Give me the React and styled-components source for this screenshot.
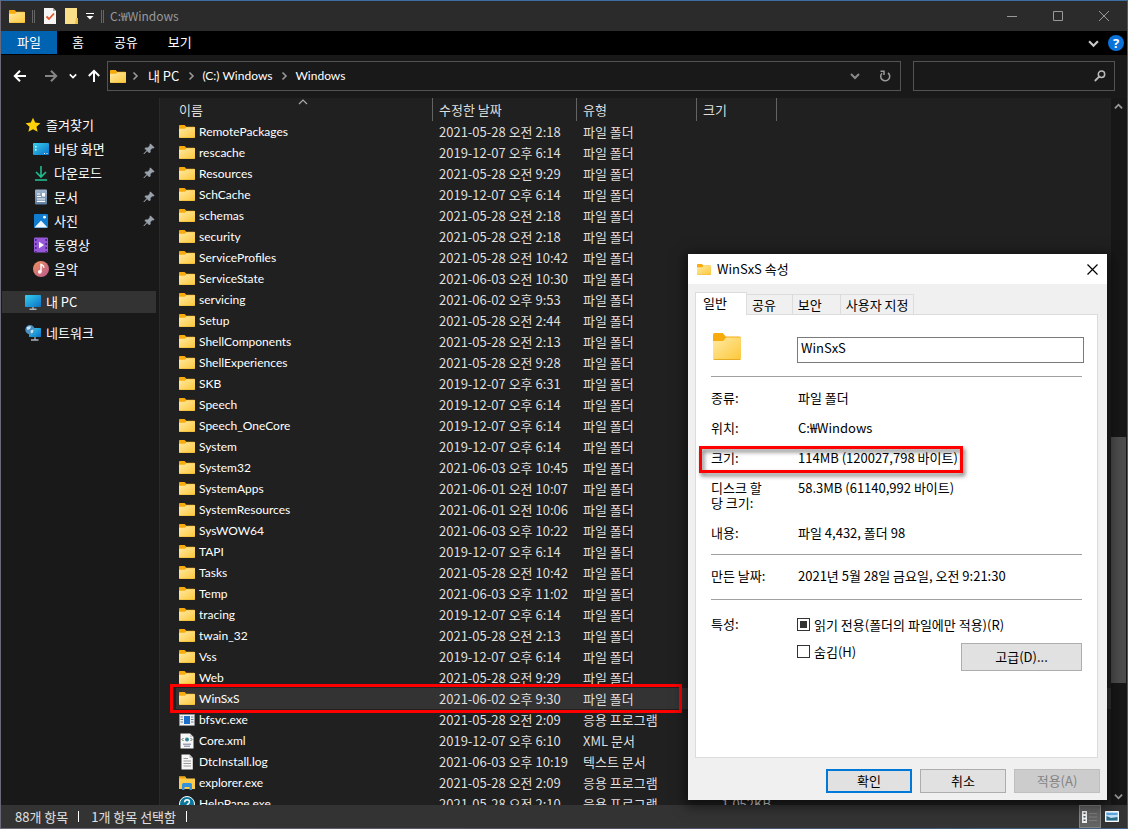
import React, { useEffect, useRef } from "react";
import styled, { createGlobalStyle, css } from "styled-components";

const KO = `"Noto Sans CJK KR", sans-serif`;
const LATIN = `Lato, "Noto Sans CJK KR", sans-serif`;

const Global = createGlobalStyle`
  *, *::before, *::after { box-sizing: border-box; }
  body { margin: 0; background: #3a5f8a; font-family: ${KO}; font-size: 13px; line-height: 15px; }
  button, input { font: inherit; color: inherit; }
  button { border: 0; padding: 0; background: none; cursor: default; }
  a { color: inherit; text-decoration: none; }
  ul, ol, dl, dd { margin: 0; padding: 0; list-style: none; }
  svg { display: block; flex: none; }
`;

const Desktop = styled.div`
  height: 100vh;
  padding: 0 1px 1px;
  background: linear-gradient(90deg, #6c6878, #565264 50%, #3d6185);
`;
const Explorer = styled.main`
  position: relative;
  height: 100%;
  display: flex;
  flex-direction: column;
  background: #191919;
  color: #fff;
  border-top: 1px solid #3d6da3;
`;

/* Title bar */
const TitleBar = styled.header`
  flex: none;
  display: flex;
  align-items: center;
  height: 30px;
  padding-left: 8px;
  background: #2b2b2b;
  color: #999;
`;
const QuickAccess = styled.div`
  display: flex;
  align-items: center;
  gap: 7px;
`;
const Grip = styled.span`
  width: 3px;
  height: 13px;
  border: solid #666;
  border-width: 0 1px;
`;
const Title = styled.h1`
  flex: 1;
  margin: 0 0 0 6px;
  padding-bottom: 2px;
  font: 12px/15px ${KO};
`;
const WindowButton = styled.button`
  width: 46px;
  height: 30px;
  display: grid;
  place-items: center;
`;

/* Ribbon */
const Ribbon = styled.nav`
  flex: none;
  display: flex;
  height: 24px;
  background: #000;
`;
const RibbonTab = styled.button`
  height: 23px;
  padding: 0 15px 2px;
  color: #fff;
  ${(p) => p.$primary && css`padding: 0 16px 2px; background: #0063b1;`}
`;
const RibbonEnd = styled.div`
  margin-left: auto;
  padding-right: 3px;
  display: flex;
  align-items: center;
  gap: 9px;
`;
const HelpButton = styled.button`
  width: 16px;
  height: 16px;
  border-radius: 50%;
  background: #0a72d8;
  color: #fff;
  font: bold 13px/16px "Noto Sans", sans-serif;
`;

/* Address bar */
const NavBar = styled.div`
  flex: none;
  display: flex;
  align-items: center;
  height: 43px;
  padding: 0 12px 1px;
`;
const NavButtons = styled.div`
  width: 94px;
  flex: none;
  display: flex;
  align-items: center;
`;
const NavButton = styled.button`
  width: ${(p) => p.$w}px;
  height: 22px;
  display: grid;
  place-items: center start;
`;
const AddressBox = styled.div`
  flex: 1;
  display: flex;
  align-items: center;
  height: 30px;
  padding-left: 2px;
  border: 1px solid #535353;
`;
const Crumbs = styled.ol`
  flex: 1;
  display: flex;
  align-items: center;
  li { display: flex; align-items: center; }
  svg { margin: 0 6px 0 7px; }
  li:first-child svg { margin: 0; }
  li:first-child svg + svg { margin: 0 8px 0 4px; }
`;
const Crumb = styled.a`
  padding-bottom: 2px;
  font: ${(p) => (p.$latin ? `12px/15px ${LATIN}` : `13px/15px ${KO}`)};
`;
const BoxButton = styled.button`
  width: 30px;
  height: 28px;
  display: grid;
  place-items: center;
`;
const SearchBox = styled.label`
  flex: none;
  width: 202px;
  height: 30px;
  margin-left: 12px;
  display: flex;
  align-items: center;
  padding: 0 8px;
  border: 1px solid #535353;
  input { flex: 1; min-width: 0; border: 0; outline: 0; background: none; }
`;

/* Body */
const Body = styled.div`
  flex: 1;
  min-height: 0;
  display: grid;
  grid-template-columns: 159px minmax(0, 1fr) 16px;
`;
const Sidebar = styled.nav`
  display: flex;
  flex-direction: column;
  gap: 8px;
  padding: 15px 3px 0 1px;
  border-right: 1px solid #2a2a2a;
`;
const SideItem = styled.a`
  display: flex;
  align-items: center;
  height: 24px;
  padding: 0 1px 0 ${(p) => (p.$nested ? 31 : 23)}px;
  ${(p) => p.$selected && css`height: 22px; margin: 2px 0 0; background: #333;`}
  span { flex: 1; margin-left: 5px; padding-bottom: 2px; }
`;
const ListPane = styled.section`
  min-height: 0;
  overflow: hidden;
  padding-left: 16px;
  background: #202020;
`;
const FileTable = styled.table`
  width: 100%;
  table-layout: fixed;
  border-collapse: separate;
  border-spacing: 0;
  th, td { padding: 0 6px; text-align: left; font-weight: 400; white-space: nowrap; color: #dedede; }
  th:first-child, td:first-child { padding-left: 3px; }
  td:nth-child(4) { text-align: right; }
`;
const HeadCell = styled.th`
  position: relative;
  height: 23px;
  border-right: ${(p) => (p.$last ? "0" : "1px solid #636363")};
  svg { position: absolute; top: -1px; left: calc(50% - 6px); }
`;
const FileRow = styled.tr`
  position: relative;
  height: 21px;
  background: ${(p) => (p.$selected ? "#333" : "none")};
  ${(p) => p.$selected && css`
    &::after {
      content: "";
      position: absolute;
      top: -4px;
      left: -6px;
      width: 512px;
      height: 29px;
      border: 3px solid #f00;
    }
  `}
`;
const FileName = styled.div`
  display: flex;
  align-items: center;
  gap: 4px;
  color: #fff;
  font: 12px/15px ${LATIN};
`;

/* Scroll bar */
const ScrollBar = styled.div`
  display: grid;
  grid-template-rows: 17px 322fr 246fr 105fr 17px;
  padding-right: 1px;
  background: #171717;
`;
const ScrollArrow = styled.button`
  grid-row: ${(p) => (p.$end ? 5 : 1)};
  display: grid;
  place-items: center;
`;
const Thumb = styled.div`
  grid-row: 3;
  background: #4d4d4d;
`;

/* Status bar */
const StatusBar = styled.footer`
  flex: none;
  display: flex;
  align-items: center;
  height: 23px;
  padding: 0 4px 0 14px;
  background: #333;
  color: #e0e0e0;
`;
const StatusText = styled.span`
  padding: 0 11px 1px 0;
  margin-right: 12px;
  background: linear-gradient(#fff, #fff) right center / 1px 11px no-repeat;
`;
const ViewButton = styled.button`
  width: 22px;
  height: 23px;
  display: grid;
  place-items: center;
  ${(p) => p.$active && css`margin-left: auto; background: #626262; border: 1px solid #838383;`}
`;

/* Properties dialog */
const Dialog = styled.section`
  position: absolute;
  right: 20px;
  bottom: 28px;
  width: 419px;
  background: #f0f0f0;
  color: #000;
  box-shadow: 0 3px 12px 3px rgba(0, 0, 0, 0.55);
`;
const DialogTitle = styled.header`
  display: flex;
  align-items: center;
  gap: 6px;
  height: 30px;
  padding-left: 9px;
  background: #fff;
  h2 { flex: 1; margin: 0; padding-bottom: 2px; font: 13px/15px ${KO}; }
`;
const CloseButton = styled.button`
  width: 30px;
  height: 30px;
  display: grid;
  place-items: center;
`;
const TabStrip = styled.div`
  display: flex;
  align-items: flex-end;
  height: 31px;
  margin: 0 7px -1px;
`;
const Tab = styled.button`
  height: 21px;
  padding: 0 ${(p) => p.$end || 16}px 1px 5px;
  border: 1px solid #dcdcdc;
  border-left-width: 0;
  ${(p) => p.$active && css`
    position: relative;
    height: 23px;
    padding: 0 19px 4px 7px;
    border-left-width: 1px;
    border-bottom: 0;
    background: #fff;
  `}
`;
const Panel = styled.div`
  margin: 0 9px 0 7px;
  padding: 18px 13px 86px 15px;
  border: 1px solid #dcdcdc;
  background: #fff;
`;
const NameRow = styled.div`
  display: flex;
  justify-content: space-between;
  align-items: flex-end;
  height: 30px;
  padding-left: 2px;
  svg { align-self: flex-start; }
`;
const NameInput = styled.input`
  width: 287px;
  height: 26px;
  padding: 0 3px 5px;
  border: 1px solid #7a7a7a;
  background: #fff;
`;
const Rule = styled.hr`
  height: 1px;
  margin: ${(p) => p.$top || 14}px 2px ${(p) => p.$bottom || 13}px 0;
  border: 0;
  background: #a0a0a0;
`;
const Props = styled.dl`
  display: grid;
  gap: 15px;
`;
const Prop = styled.div`
  position: relative;
  display: grid;
  grid-template-columns: 60px 1fr;
  column-gap: 27px;
  word-break: break-all;
  dt { white-space: ${(p) => (p.$nowrap ? "nowrap" : "normal")}; }
  ${(p) => p.$marked && css`
    &::after {
      content: "";
      position: absolute;
      top: -4px;
      left: -12px;
      width: 264px;
      height: 27px;
      border: 3px solid #f00;
      filter: drop-shadow(2px 3px 2px rgba(0, 0, 0, 0.55));
    }
  `}
`;
const Attributes = styled.fieldset`
  display: grid;
  grid-template-columns: 86px 1fr;
  margin: 0 2px 0 0;
  padding: 0;
  border: 0;
`;
const CheckLabel = styled.label`
  display: flex;
  align-items: center;
  gap: 4px;
  height: 17px;
`;
const CheckInput = styled.input`
  appearance: none;
  width: 13px;
  height: 13px;
  margin: 0;
  padding: 2px;
  border: 1px solid #333;
  background: #fff;
  &:indeterminate { background: #333 content-box; }
`;
const AttrLine = styled.div`
  display: flex;
  justify-content: space-between;
  margin-top: 10px;
`;
const PushButton = styled.button`
  width: ${(p) => (p.$large ? 121 : 86)}px;
  height: ${(p) => (p.$large ? 28 : 24)}px;
  padding-bottom: 2px;
  border: ${(p) => (p.$default ? "2px solid #0078d7" : "1px solid #adadad")};
  background: #e1e1e1;
  &:disabled { background: #ccc; border-color: #bfbfbf; color: #838383; }
`;
const DialogButtons = styled.footer`
  display: flex;
  justify-content: flex-end;
  gap: 8px;
  padding: 11px 7px 7px;
`;

/* Icons */
const Folder = ({ width = 16, height = 13 }) => (
  <svg width={width} height={height} viewBox="0 1 16 13" preserveAspectRatio="none">
    <defs>
      <linearGradient id="fold" x1="0" y1="0" x2="1" y2="1">
        <stop offset="0" stopColor="#ffe9a3" />
        <stop offset="1" stopColor="#fdc83a" />
      </linearGradient>
    </defs>
    <path d="M0 2Q0 1 .9 1H5.6L7.3 2.7H15Q16 2.7 16 3.7V7H0z" fill="#f7ab0c" />
    <path d="M0 4.8H5.8L7.6 3.2H16V13.2Q16 14 15.2 14H.8Q0 14 0 13.2z" fill="url(#fold)" />
    <path d="M.4 13.8H15.6" stroke="#e5a91f" strokeWidth=".5" />
  </svg>
);
const Chevron = ({ dir = "down", size = 10, color = "#c8c8c8", w = 2 }) => {
  const d = { down: "M1 3L5 7L9 3", up: "M1 7L5 3L9 7", right: "M3.5 1.5L7 5L3.5 8.5" }[dir];
  return (
    <svg width={size} height={size} viewBox="0 0 10 10" fill="none" stroke={color} strokeWidth={w}>
      <path d={d} />
    </svg>
  );
};
const Arrow = ({ rotate = 0, color = "#fff" }) => (
  <svg width="14" height="14" viewBox="0 0 14 14" fill="none" stroke={color} strokeWidth="2">
    <path transform={`rotate(${rotate} 7 7)`} d="M13 7H2M7 1.8L1.8 7L7 12.2" />
  </svg>
);
const Pin = () => (
  <svg width="12" height="12" viewBox="0 0 12 12">
    <path d="M7.4 .8L11.2 4.6L10 5.2L9.2 5L7.2 7.2L7.3 9L6.3 10L4.1 7.8L1 11L.8 10.8L3.8 7.6L1.8 5.6L2.8 4.7L4.7 4.8L6.9 2.8L6.7 2z" fill="#9aa3ab" stroke="#9aa3ab" strokeWidth=".6" />
  </svg>
);
const icons = {
  star: <path d="M8 .8L10.2 5.6L15.4 6.2L11.5 9.7L12.6 14.8L8 12.2L3.4 14.8L4.5 9.7L.6 6.2L5.8 5.6z" fill="#fdd009" />,
  desktop: (
    <>
      <rect y="2" width="16" height="12" rx="1" fill="url(#blue)" />
      <path d="M2 5h1.5v1.5H2zM2 8h1.5v1.5H2z" fill="#fff" />
      <path d="M11 12.5h1M13.5 12.5h1" stroke="#e8f6ff" />
    </>
  ),
  download: (
    <>
      <path d="M8 1V11.5M3 7L8 12L13 7" fill="none" stroke="#1fbf8f" strokeWidth="1.6" />
      <path d="M2 15H14" stroke="#23a884" strokeWidth="1.8" />
    </>
  ),
  doc: (
    <>
      <rect x="2" y=".5" width="12" height="15" rx="1" fill="url(#docg)" />
      <path d="M4 5h3M4 7.5h4M4 10h8M4 12.3h8" stroke="#fff" strokeWidth="1.2" />
      <rect x="9" y="4" width="3" height="3.5" fill="#fff" />
    </>
  ),
  photo: (
    <>
      <rect x="1" y="1" width="14" height="14" rx="1" fill="#0f7cd0" />
      <path d="M1.5 14.5L8 7.5L14.5 14.5z" fill="#eef7ff" />
      <circle cx="11.5" cy="4.2" r="1.4" fill="#fff" />
    </>
  ),
  video: (
    <>
      <rect x="1" y=".5" width="14" height="15" rx="1" fill="#9657d8" />
      <path d="M2.8 2V15M13.2 2V15" stroke="#4c2589" strokeWidth="1.6" strokeDasharray="2 2" />
      <path d="M6 4.8V11.2L11 8z" fill="#fff" />
    </>
  ),
  music: (
    <>
      <circle cx="8" cy="8" r="8" fill="url(#mus)" />
      <circle cx="6.8" cy="10.8" r="1.9" fill="#fff" />
      <path d="M8 10.8V3.4Q10.8 4.4 10.8 6.8" fill="none" stroke="#fff" strokeWidth="1.4" />
    </>
  ),
  pc: (
    <>
      <rect y="1" width="16" height="12" rx=".8" fill="url(#blue)" />
      <path d="M8 13V15M4.5 15.2H11.5" stroke="#a9b4bc" strokeWidth="1.4" />
    </>
  ),
  network: (
    <>
      <rect x="4" y="3" width="12" height="9" rx=".6" fill="url(#blue)" />
      <path d="M10 12V14.5M6 15H13.5" stroke="#a9b4bc" strokeWidth="1.3" />
      <circle cx="5" cy="4.8" r="4.7" fill="#4a90c2" />
      <path d="M1.5 2.6Q4 .8 6 1.4L5 4L2.5 5zM5.5 5.5L8.5 4.5L8 7.5L6 8.5z" fill="#cbe6f5" />
    </>
  ),
  exe: (
    <>
      <rect x=".5" y="2.5" width="15" height="11" fill="#f1f1f1" stroke="#999" strokeWidth=".6" />
      <rect x="5" y="4" width="6" height="8" fill="#1b6fc9" />
      <path d="M1.5 5H4M1.5 7.5H4M1.5 10H4M12 5H14.5M12 7.5H14.5M12 10H14.5" stroke="#68809a" />
    </>
  ),
  xml: (
    <>
      <path d="M1.5 .5H11L14.5 4V15.5H1.5z" fill="#f7f7f7" />
      <path d="M11 .5V4H14.5" fill="#ccc" />
      <path d="M4.5 5L3 6.5L4.5 8M11.5 5L13 6.5L11.5 8" fill="none" stroke="#555" strokeWidth=".9" />
      <circle cx="8" cy="6.5" r="2" fill="#2c8a94" />
      <path d="M4 11.2H12M5 13.2H11" stroke="#777a9c" />
    </>
  ),
  log: (
    <>
      <path d="M2.5 .5H10.5L13.8 4V15.5H2.5z" fill="#f7f7f7" />
      <path d="M10.5 .5V4H13.8" fill="#bbb" />
      <path d="M4.5 4.5H9M4.5 7H12M4.5 9.5H12M4.5 12H12" stroke="#9a9a9a" />
    </>
  ),
  explorer: (
    <>
      <path d="M0 1.5H6L7.5 3.5H16V14H0z" fill="#fccb4b" />
      <path d="M0 1.5H6L7.5 3.5H0z" fill="#f0a30a" />
      <path d="M3 15V9.5Q3 8 4.5 8H11.5Q13 8 13 9.5V15H10.5V12H5.5V15z" fill="#3492dc" />
    </>
  ),
  help: (
    <>
      <circle cx="8" cy="8" r="7.5" fill="#08779b" stroke="#fff" />
      <path d="M5.6 6.2Q5.7 3.8 8.1 3.8Q10.5 3.9 10.4 6Q10.3 7.2 9 8Q8 8.7 8 10M8 11.3V12.8" fill="none" stroke="#fff" strokeWidth="1.5" />
    </>
  ),
};
const Icon = ({ name }) =>
  name === "folder" ? <Folder /> : (
    <svg width="16" height="16" viewBox="0 0 16 16">
      <defs>
        <linearGradient id="blue" x1="0" y1="0" x2="1" y2="1">
          <stop offset="0" stopColor="#36d0ee" />
          <stop offset="1" stopColor="#0b6fc6" />
        </linearGradient>
        <linearGradient id="docg" x1="0" y1="0" x2="0" y2="1">
          <stop offset="0" stopColor="#9fb4cb" />
          <stop offset="1" stopColor="#5f7fa3" />
        </linearGradient>
        <linearGradient id="mus" x1="0" y1="0" x2="1" y2="1">
          <stop offset="0" stopColor="#f2915c" />
          <stop offset="1" stopColor="#b8598f" />
        </linearGradient>
      </defs>
      {icons[name]}
    </svg>
  );

/* Data */
const AM = "오전", PM = "오후";
const folder = (name, day, half, time) => ({ name, date: `${day} ${half} ${time}`, type: "파일 폴더", icon: "folder" });
const file = (name, date, type, icon, size = "") => ({ name, date, type, icon, size });
const files = [
  folder("RemotePackages", "2021-05-28", AM, "2:18"),
  folder("rescache", "2019-12-07", PM, "6:14"),
  folder("Resources", "2021-05-28", AM, "9:29"),
  folder("SchCache", "2019-12-07", PM, "6:14"),
  folder("schemas", "2021-05-28", AM, "2:18"),
  folder("security", "2021-05-28", AM, "2:18"),
  folder("ServiceProfiles", "2021-05-28", AM, "10:42"),
  folder("ServiceState", "2021-06-03", AM, "10:30"),
  folder("servicing", "2021-06-02", PM, "9:53"),
  folder("Setup", "2021-05-28", AM, "2:44"),
  folder("ShellComponents", "2021-05-28", AM, "2:13"),
  folder("ShellExperiences", "2021-05-28", AM, "9:28"),
  folder("SKB", "2019-12-07", PM, "6:31"),
  folder("Speech", "2019-12-07", PM, "6:14"),
  folder("Speech_OneCore", "2019-12-07", PM, "6:14"),
  folder("System", "2019-12-07", PM, "6:14"),
  folder("System32", "2021-06-03", PM, "10:45"),
  folder("SystemApps", "2021-06-01", AM, "10:07"),
  folder("SystemResources", "2021-06-01", AM, "10:06"),
  folder("SysWOW64", "2021-06-03", PM, "10:22"),
  folder("TAPI", "2019-12-07", PM, "6:14"),
  folder("Tasks", "2021-05-28", AM, "10:42"),
  folder("Temp", "2021-06-03", PM, "11:02"),
  folder("tracing", "2019-12-07", PM, "6:14"),
  folder("twain_32", "2021-05-28", AM, "2:13"),
  folder("Vss", "2019-12-07", PM, "6:14"),
  folder("Web", "2021-05-28", AM, "9:29"),
  folder("WinSxS", "2021-06-02", PM, "9:30"),
  file("bfsvc.exe", "2021-05-28 오전 2:09", "응용 프로그램", "exe"),
  file("Core.xml", "2019-12-07 오후 6:10", "XML 문서", "xml"),
  file("DtcInstall.log", "2021-06-03 오후 10:19", "텍스트 문서", "log"),
  file("explorer.exe", "2021-05-28 오전 2:09", "응용 프로그램", "explorer"),
  file("HelpPane.exe", "2021-05-28 오전 2:10", "응용 프로그램", "help", "1,052KB"),
];
const favorites = [
  ["바탕 화면", "desktop", true],
  ["다운로드", "download", true],
  ["문서", "doc", true],
  ["사진", "photo", true],
  ["동영상", "video", false],
  ["음악", "music", false],
];

function PropertiesDialog() {
  const readOnly = useRef(null);
  useEffect(() => {
    readOnly.current.indeterminate = true;
  }, []);
  return (
    <Dialog role="dialog" aria-labelledby="props-title">
      <DialogTitle>
        <Folder width={14} height={11} />
        <h2 id="props-title">WinSxS 속성</h2>
        <CloseButton aria-label="닫기">
          <svg width="11" height="11" viewBox="0 0 11 11" stroke="#000" strokeWidth="1.2"><path d="M.5 .5L10.5 10.5M10.5 .5L.5 10.5" /></svg>
        </CloseButton>
      </DialogTitle>
      <TabStrip role="tablist">
        <Tab $active role="tab" aria-selected="true">일반</Tab>
        <Tab role="tab">공유</Tab>
        <Tab role="tab" $end={18}>보안</Tab>
        <Tab role="tab" $end={5}>사용자 지정</Tab>
      </TabStrip>
      <Panel role="tabpanel">
        <NameRow>
          <Folder width={28} height={27} />
          <NameInput aria-label="이름" defaultValue="WinSxS" />
        </NameRow>
        <Rule $top={13} />
        <Props>
          <Prop><dt>종류:</dt><dd>파일 폴더</dd></Prop>
          <Prop><dt>위치:</dt><dd>C:₩Windows</dd></Prop>
          <Prop $marked><dt>크기:</dt><dd>114MB (120027,798 바이트)</dd></Prop>
          <Prop><dt>디스크 할당 크기:</dt><dd>58.3MB (61140,992 바이트)</dd></Prop>
          <Prop><dt>내용:</dt><dd>파일 4,432, 폴더 98</dd></Prop>
        </Props>
        <Rule />
        <Props>
          <Prop $nowrap><dt>만든 날짜:</dt><dd>2021년 5월 28일 금요일, 오전 9:21:30</dd></Prop>
        </Props>
        <Rule $top={16} $bottom={16} />
        <Attributes aria-label="특성">
          <span>특성:</span>
          <div>
            <CheckLabel><CheckInput type="checkbox" ref={readOnly} />읽기 전용(폴더의 파일에만 적용)(R)</CheckLabel>
            <AttrLine>
              <CheckLabel><CheckInput type="checkbox" />숨김(H)</CheckLabel>
              <PushButton $large>고급(D)...</PushButton>
            </AttrLine>
          </div>
        </Attributes>
      </Panel>
      <DialogButtons>
        <PushButton $default>확인</PushButton>
        <PushButton>취소</PushButton>
        <PushButton disabled>적용(A)</PushButton>
      </DialogButtons>
    </Dialog>
  );
}

export default function App() {
  return (
    <Desktop>
      <Global />
      <Explorer>
        <TitleBar>
          <QuickAccess>
            <Folder />
            <Grip />
            <svg width="16" height="16" viewBox="0 0 16 16">
              <path d="M2 0H11L14 3V16H2z" fill="#f5f5f5" /><path d="M11 0V3H14" fill="#aaa" />
              <path d="M4.5 8.5L7 11L12 5.5" fill="none" stroke="#e2562b" strokeWidth="1.8" />
            </svg>
            <svg width="14" height="16" viewBox="0 0 14 16"><path d="M0 0H12V10H13V16H0z" fill="#fbe08a" /><path d="M11 10H13V16H10z" fill="#f0c042" /></svg>
            <svg width="8" height="8" viewBox="0 0 8 8"><path d="M0 1.5H8" stroke="#fff" /><path d="M.5 4H7.5L4 7.5z" fill="#fff" /></svg>
            <Grip />
          </QuickAccess>
          <Title>C:₩Windows</Title>
          <WindowButton aria-label="최소화"><svg width="10" height="10" stroke="#999"><path d="M0 5.5H10" /></svg></WindowButton>
          <WindowButton aria-label="최대화"><svg width="10" height="10" stroke="#999" fill="none"><path d="M.5 .5H9.5V9.5H.5z" /></svg></WindowButton>
          <WindowButton aria-label="닫기"><svg width="10" height="10" stroke="#999"><path d="M0 0L10 10M10 0L0 10" /></svg></WindowButton>
        </TitleBar>
        <Ribbon>
          <RibbonTab $primary>파일</RibbonTab>
          <RibbonTab>홈</RibbonTab>
          <RibbonTab>공유</RibbonTab>
          <RibbonTab>보기</RibbonTab>
          <RibbonEnd><Chevron size={11} /><HelpButton aria-label="도움말">?</HelpButton></RibbonEnd>
        </Ribbon>
        <NavBar>
          <NavButtons>
            <NavButton $w={31} aria-label="뒤로"><Arrow /></NavButton>
            <NavButton $w={25} aria-label="앞으로"><Arrow rotate={180} color="#858585" /></NavButton>
            <NavButton $w={18} aria-label="최근 위치"><Chevron size={8} color="#fff" /></NavButton>
            <NavButton $w={18} aria-label="위로"><Arrow rotate={90} /></NavButton>
          </NavButtons>
          <AddressBox>
            <Crumbs>
              <li><Folder /><Chevron dir="right" color="#999" w={1.6} /><Crumb href="#pc">내 PC</Crumb></li>
              <li><Chevron dir="right" color="#999" w={1.6} /><Crumb $latin href="#c">(C:) Windows</Crumb></li>
              <li><Chevron dir="right" color="#999" w={1.6} /><Crumb $latin href="#windows">Windows</Crumb></li>
            </Crumbs>
            <BoxButton aria-label="이전 위치"><Chevron color="#8a8a8a" /></BoxButton>
            <BoxButton aria-label="새로 고침">
              <svg width="12" height="12" viewBox="0 0 12 12" fill="none" stroke="#9a9a9a" strokeWidth="1.5"><path d="M9 2.8A4.5 4.5 0 1 1 3 3.2M1.5 1.2H5V5" /></svg>
            </BoxButton>
          </AddressBox>
          <SearchBox>
            <input type="search" aria-label="검색" />
            <svg width="12" height="12" viewBox="0 0 12 12" fill="none" stroke="#bbb" strokeWidth="1.5"><circle cx="7.5" cy="4.2" r="3.2" /><path d="M5.2 6.6L.8 11" strokeWidth="1.8" /></svg>
          </SearchBox>
        </NavBar>
        <Body>
          <Sidebar>
            <div>
              <SideItem href="#favorites"><Icon name="star" /><span>즐겨찾기</span></SideItem>
              {favorites.map(([label, icon, pinned]) => (
                <SideItem key={icon} $nested href={`#${icon}`}><Icon name={icon} /><span>{label}</span>{pinned && <Pin />}</SideItem>
              ))}
            </div>
            <SideItem $selected href="#pc"><Icon name="pc" /><span>내 PC</span></SideItem>
            <SideItem href="#network"><Icon name="network" /><span>네트워크</span></SideItem>
          </Sidebar>
          <ListPane>
            <FileTable>
              <colgroup>
                <col width="257" /><col width="144" /><col width="120" /><col width="80" /><col />
              </colgroup>
              <thead>
                <tr>
                  <HeadCell>이름<Chevron dir="up" color="#aaa" w={1.2} /></HeadCell>
                  <HeadCell>수정한 날짜</HeadCell>
                  <HeadCell>유형</HeadCell>
                  <HeadCell>크기</HeadCell>
                  <HeadCell $last as="td" />
                </tr>
              </thead>
              <tbody>
                {files.map((f) => (
                  <FileRow key={f.name} $selected={f.name === "WinSxS"}>
                    <td><FileName><Icon name={f.icon} />{f.name}</FileName></td>
                    <td>{f.date}</td>
                    <td>{f.type}</td>
                    <td>{f.size}</td>
                    <td />
                  </FileRow>
                ))}
              </tbody>
            </FileTable>
          </ListPane>
          <ScrollBar>
            <ScrollArrow aria-label="위로 스크롤"><Chevron dir="up" size={9} color="#999" /></ScrollArrow>
            <Thumb />
            <ScrollArrow $end aria-label="아래로 스크롤"><Chevron size={9} color="#999" /></ScrollArrow>
          </ScrollBar>
        </Body>
        <StatusBar>
          <StatusText>88개 항목</StatusText>
          <StatusText>1개 항목 선택함</StatusText>
          <ViewButton $active aria-label="자세히">
            <svg width="16" height="14" viewBox="0 0 16 14"><path d="M0 1H5V13H0z" fill="#eee" /><path d="M1.5 2.5H3.5V4H1.5zM1.5 6H3.5V7.5H1.5zM1.5 9.5H3.5V11H1.5z" fill="#456" /><path d="M7 3.5H15M7 7H15M7 10.5H15" stroke="#7c7c7c" /></svg>
          </ViewButton>
          <ViewButton aria-label="큰 아이콘">
            <svg width="14" height="11" viewBox="0 0 14 11"><path d="M.5 .5H13.5V10.5H.5z" fill="#bfe0f7" stroke="#fff" /><path d="M1.5 5L6 7L12.5 6V9.5H1.5z" fill="#2d6c86" /><path d="M1.5 2H12.5V4H1.5z" fill="#5da6e0" /></svg>
          </ViewButton>
        </StatusBar>
        <PropertiesDialog />
      </Explorer>
    </Desktop>
  );
}
